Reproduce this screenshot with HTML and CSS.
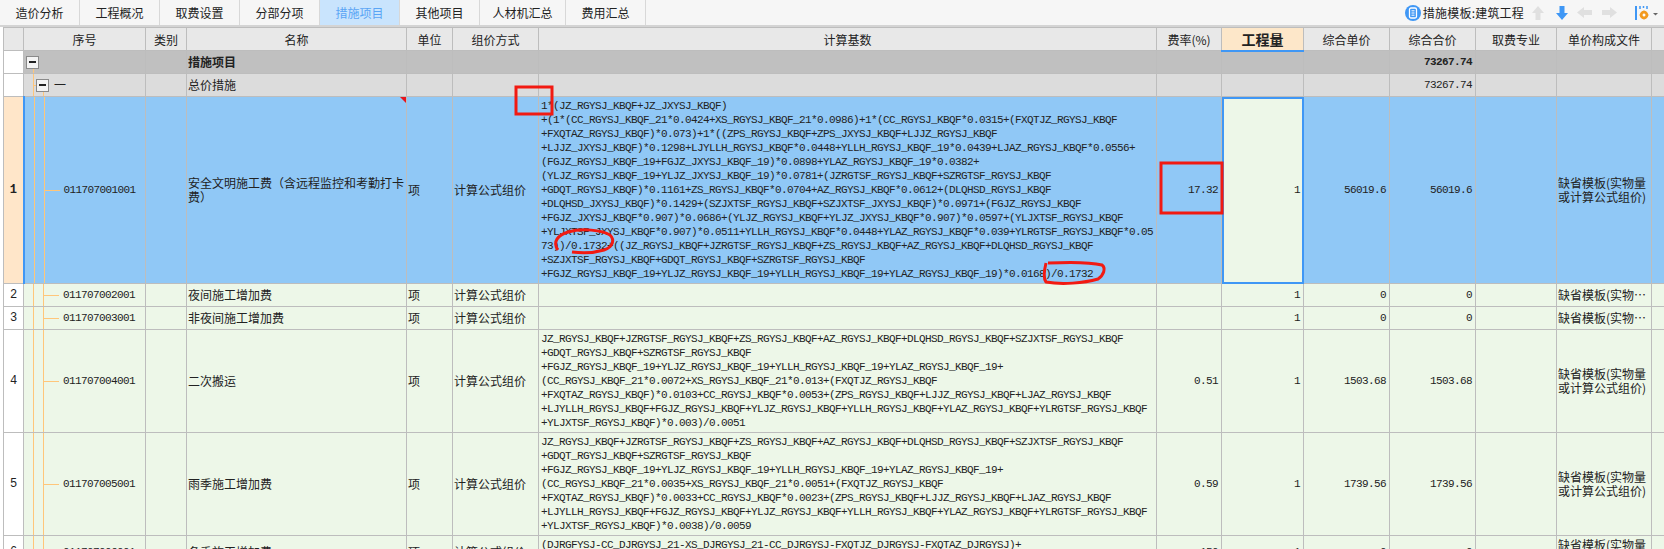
FILE: index.html
```html
<!DOCTYPE html>
<html lang="zh-CN">
<head>
  <meta charset="UTF-8" />
  <title>措施项目</title>
  <link rel="stylesheet" href="styles.css">
</head>
<body>
  <div class="topbar">
    <div class="tabs">
      <div class="tab">造价分析</div>
      <div class="tab">工程概况</div>
      <div class="tab">取费设置</div>
      <div class="tab">分部分项</div>
      <div class="tab active">措施项目</div>
      <div class="tab">其他项目</div>
      <div class="tab wide">人材机汇总</div>
      <div class="tab">费用汇总</div>
    </div>
    <div class="tools">
      <svg class="ico-doc" width="16" height="16" viewBox="0 0 16 16"><circle cx="8" cy="8" r="8" fill="#3f97f5"/><rect x="4.500" y="3" width="7" height="10" rx="1.500" fill="none" stroke="#fff" stroke-width="1.300"/><path d="M6.500 5.800h3M6.500 8h3M6.500 10.200h3" stroke="#fff"/></svg>
      <span class="tpl">措施模板:建筑工程</span>
      <svg class="ico up" width="12" height="14" viewBox="0 0 12 14"><path d="M6 0l6 7H8.500v7h-5V7H0z" fill="#e0e0e0"/></svg>
      <svg class="ico down" width="12" height="14" viewBox="0 0 12 14"><path d="M6 14L0 7h3.500V0h5v7H12z" fill="#3f97f5"/></svg>
      <svg class="ico left" width="15" height="11" viewBox="0 0 15 11"><path d="M0 5.500L7 0v3h8v5H7v3z" fill="#e0e0e0"/></svg>
      <svg class="ico right" width="15" height="11" viewBox="0 0 15 11"><path d="M15 5.500L8 0v3H0v5h8v3z" fill="#e0e0e0"/></svg>
      <svg class="ico gear" width="24" height="16" viewBox="0 0 24 16"><path d="M1 1v14" stroke="#3f97f5" stroke-width="2"/><path d="M5 1v3M8.500 1v2M12 1v3" stroke="#3f97f5" stroke-width="1.500"/><circle cx="9" cy="10" r="3" fill="none" stroke="#f39a1e" stroke-width="2.500"/><path d="M9 5.500v9M4.500 10h9M6 7l6 6M12 7l-6 6" stroke="#f39a1e"/><circle cx="9" cy="10" r="1.200" fill="#fff"/><path d="M18 8h5l-2.500 2.500z" fill="#666"/></svg>
    </div>
  </div>

  <table class="grid">
    <colgroup>
      <col class="c-head"><col class="c-seq"><col class="c-type"><col class="c-name"><col class="c-unit"><col class="c-way"><col class="c-base"><col class="c-rate"><col class="c-qty"><col class="c-price"><col class="c-total"><col class="c-spec"><col class="c-file"><col class="c-end">
    </colgroup>
    <thead>
      <tr>
        <th></th><th>序号</th><th>类别</th><th>名称</th><th>单位</th><th>组价方式</th><th>计算基数</th><th>费率(%)</th><th class="th-qty">工程量</th><th>综合单价</th><th>综合合价</th><th>取费专业</th><th>单价构成文件</th><th></th>
      </tr>
    </thead>
    <tbody>
      <tr class="group">
        <td class="rh"></td>
        <td class="tree t0"><span class="box"></span></td><td></td><td class="b">措施项目</td><td></td><td></td><td></td><td></td><td></td><td></td><td class="num b">73267.74</td><td></td><td></td><td></td>
      </tr>
      <tr class="sub">
        <td class="rh"></td>
        <td class="tree t1"><span class="box"></span><span class="dash">一</span></td><td></td><td>总价措施</td><td></td><td></td><td></td><td></td><td></td><td></td><td class="num">73267.74</td><td></td><td></td><td></td>
      </tr>
      <tr class="sel">
        <td class="rh cur">1</td>
        <td class="tree t2">011707001001</td><td></td><td class="name mark">安全文明施工费（含远程监控和考勤打卡费）</td><td>项</td><td>计算公式组价</td>
        <td class="formula">1*(JZ_RGYSJ_KBQF+JZ_JXYSJ_KBQF)<br>+(1*(CC_RGYSJ_KBQF_21*0.0424+XS_RGYSJ_KBQF_21*0.0986)+1*(CC_RGYSJ_KBQF*0.0315+(FXQTJZ_RGYSJ_KBQF<br>+FXQTAZ_RGYSJ_KBQF)*0.073)+1*((ZPS_RGYSJ_KBQF+ZPS_JXYSJ_KBQF+LJJZ_RGYSJ_KBQF<br>+LJJZ_JXYSJ_KBQF)*0.1298+LJYLLH_RGYSJ_KBQF*0.0448+YLLH_RGYSJ_KBQF_19*0.0439+LJAZ_RGYSJ_KBQF*0.0556+<br>(FGJZ_RGYSJ_KBQF_19+FGJZ_JXYSJ_KBQF_19)*0.0898+YLAZ_RGYSJ_KBQF_19*0.0382+<br>(YLJZ_RGYSJ_KBQF_19+YLJZ_JXYSJ_KBQF_19)*0.0781+(JZRGTSF_RGYSJ_KBQF+SZRGTSF_RGYSJ_KBQF<br>+GDQT_RGYSJ_KBQF)*0.1161+ZS_RGYSJ_KBQF*0.0704+AZ_RGYSJ_KBQF*0.0612+(DLQHSD_RGYSJ_KBQF<br>+DLQHSD_JXYSJ_KBQF)*0.1429+(SZJXTSF_RGYSJ_KBQF+SZJXTSF_JXYSJ_KBQF)*0.0971+(FGJZ_RGYSJ_KBQF<br>+FGJZ_JXYSJ_KBQF*0.907)*0.0686+(YLJZ_RGYSJ_KBQF+YLJZ_JXYSJ_KBQF*0.907)*0.0597+(YLJXTSF_RGYSJ_KBQF<br>+YLJXTSF_JXYSJ_KBQF*0.907)*0.0511+YLLH_RGYSJ_KBQF*0.0448+YLAZ_RGYSJ_KBQF*0.039+YLRGTSF_RGYSJ_KBQF*0.05<br>73))/0.1732+((JZ_RGYSJ_KBQF+JZRGTSF_RGYSJ_KBQF+ZS_RGYSJ_KBQF+AZ_RGYSJ_KBQF+DLQHSD_RGYSJ_KBQF<br>+SZJXTSF_RGYSJ_KBQF+GDQT_RGYSJ_KBQF+SZRGTSF_RGYSJ_KBQF<br>+FGJZ_RGYSJ_KBQF_19+YLJZ_RGYSJ_KBQF_19+YLLH_RGYSJ_KBQF_19+YLAZ_RGYSJ_KBQF_19)*0.0168)/0.1732</td>
        <td class="num">17.32</td><td class="num editing">1</td><td class="num">56019.6</td><td class="num">56019.6</td><td></td><td>缺省模板(实物量或计算公式组价)</td><td></td>
      </tr>
      <tr class="item">
        <td class="rh">2</td>
        <td class="tree t2">011707002001</td><td></td><td>夜间施工增加费</td><td>项</td><td>计算公式组价</td><td></td><td></td><td class="num">1</td><td class="num">0</td><td class="num">0</td><td></td><td class="cut">缺省模板(实物量或计算公式组价)</td><td></td>
      </tr>
      <tr class="item">
        <td class="rh">3</td>
        <td class="tree t2">011707003001</td><td></td><td>非夜间施工增加费</td><td>项</td><td>计算公式组价</td><td></td><td></td><td class="num">1</td><td class="num">0</td><td class="num">0</td><td></td><td class="cut">缺省模板(实物量或计算公式组价)</td><td></td>
      </tr>
      <tr class="item">
        <td class="rh">4</td>
        <td class="tree t2">011707004001</td><td></td><td>二次搬运</td><td>项</td><td>计算公式组价</td>
        <td class="formula">JZ_RGYSJ_KBQF+JZRGTSF_RGYSJ_KBQF+ZS_RGYSJ_KBQF+AZ_RGYSJ_KBQF+DLQHSD_RGYSJ_KBQF+SZJXTSF_RGYSJ_KBQF<br>+GDQT_RGYSJ_KBQF+SZRGTSF_RGYSJ_KBQF<br>+FGJZ_RGYSJ_KBQF_19+YLJZ_RGYSJ_KBQF_19+YLLH_RGYSJ_KBQF_19+YLAZ_RGYSJ_KBQF_19+<br>(CC_RGYSJ_KBQF_21*0.0072+XS_RGYSJ_KBQF_21*0.013+(FXQTJZ_RGYSJ_KBQF<br>+FXQTAZ_RGYSJ_KBQF)*0.0103+CC_RGYSJ_KBQF*0.0053+(ZPS_RGYSJ_KBQF+LJJZ_RGYSJ_KBQF+LJAZ_RGYSJ_KBQF<br>+LJYLLH_RGYSJ_KBQF+FGJZ_RGYSJ_KBQF+YLJZ_RGYSJ_KBQF+YLLH_RGYSJ_KBQF+YLAZ_RGYSJ_KBQF+YLRGTSF_RGYSJ_KBQF<br>+YLJXTSF_RGYSJ_KBQF)*0.003)/0.0051</td>
        <td class="num">0.51</td><td class="num">1</td><td class="num">1503.68</td><td class="num">1503.68</td><td></td><td>缺省模板(实物量或计算公式组价)</td><td></td>
      </tr>
      <tr class="item">
        <td class="rh">5</td>
        <td class="tree t2">011707005001</td><td></td><td>雨季施工增加费</td><td>项</td><td>计算公式组价</td>
        <td class="formula">JZ_RGYSJ_KBQF+JZRGTSF_RGYSJ_KBQF+ZS_RGYSJ_KBQF+AZ_RGYSJ_KBQF+DLQHSD_RGYSJ_KBQF+SZJXTSF_RGYSJ_KBQF<br>+GDQT_RGYSJ_KBQF+SZRGTSF_RGYSJ_KBQF<br>+FGJZ_RGYSJ_KBQF_19+YLJZ_RGYSJ_KBQF_19+YLLH_RGYSJ_KBQF_19+YLAZ_RGYSJ_KBQF_19+<br>(CC_RGYSJ_KBQF_21*0.0035+XS_RGYSJ_KBQF_21*0.0051+(FXQTJZ_RGYSJ_KBQF<br>+FXQTAZ_RGYSJ_KBQF)*0.0033+CC_RGYSJ_KBQF*0.0023+(ZPS_RGYSJ_KBQF+LJJZ_RGYSJ_KBQF+LJAZ_RGYSJ_KBQF<br>+LJYLLH_RGYSJ_KBQF+FGJZ_RGYSJ_KBQF+YLJZ_RGYSJ_KBQF+YLLH_RGYSJ_KBQF+YLAZ_RGYSJ_KBQF+YLRGTSF_RGYSJ_KBQF<br>+YLJXTSF_RGYSJ_KBQF)*0.0038)/0.0059</td>
        <td class="num">0.59</td><td class="num">1</td><td class="num">1739.56</td><td class="num">1739.56</td><td></td><td>缺省模板(实物量或计算公式组价)</td><td></td>
      </tr>
      <tr class="item">
        <td class="rh">6</td>
        <td class="tree t2">011707006001</td><td></td><td>冬季施工增加费</td><td>项</td><td>计算公式组价</td>
        <td class="formula">(DJRGFYSJ-CC_DJRGYSJ_21-XS_DJRGYSJ_21-CC_DJRGYSJ-FXQTJZ_DJRGYSJ-FXQTAZ_DJRGYSJ)+<br>DJJXFYSJ</td>
        <td class="num">150</td><td class="num">1</td><td class="num">0</td><td class="num">0</td><td></td><td>缺省模板(实物量或计算公式组价)</td><td></td>
      </tr>
    </tbody>
  </table>

  <!-- red marks someone drew on top of the screenshot -->
  <svg class="marks" width="1664" height="549" viewBox="0 0 1664 549">
    <rect x="516" y="87" width="36" height="27" fill="none" stroke="#f21a12" stroke-width="3"/>
    <rect x="1161" y="163" width="61" height="50" fill="none" stroke="#f21a12" stroke-width="3"/>
    <path d="M558 250c-6-8 0-15 10-18 14-4 34-2 42 3 5 5 3 12-6 15-10 3-24 3-32 2" fill="none" stroke="#f21a12" stroke-width="3"/>
    <path d="M1046 263c-2 8-3 15 0 19 16 3 38 1 52-3 6-4 8-11 4-14-12-3-32-3-54-2" fill="none" stroke="#f21a12" stroke-width="3"/>
  </svg>
</body>
</html>
```

FILE: styles.css
```css
* {
  margin: 0;
  padding: 0;
  box-sizing: border-box;
}

body {
  font-family: "Noto Sans CJK SC", sans-serif;
  font-size: 12px;
  color: #222;
  background: #fff;
  height: 549px;
  overflow: hidden;
  position: relative;
}

/* Top tabs + toolbar */
.topbar {
  display: flex;
  justify-content: space-between;
  height: 27px;
  background: #f6f6f6;
  border-bottom: 2px solid #d4d4d4;
}

.tabs {
  display: flex;
}

.tab {
  width: 80px;
  line-height: 25px;
  text-align: center;
  border-right: 1px solid #d8d8d8;
}

.tab.wide {
  width: 86px;
}

.tab.active {
  background: #c9e4fd;
  color: #5aa5f5;
}

.tools {
  display: flex;
  align-items: center;
  height: 25px;
  padding-right: 5px;
}

.tpl {
  margin: 0 8px 0 2px;
  letter-spacing: 0.2px;
}

.ico.up {
  margin-right: 12px;
}

.ico.down {
  margin-right: 9px;
}

.ico.left {
  margin-right: 10px;
}

.ico.right {
  margin-right: 18px;
}

/* Grid */
.grid {
  table-layout: fixed;
  border-collapse: collapse;
  width: 1661px;
  margin-left: 3px;
}

.c-head { width: 20px; }
.c-seq { width: 122px; }
.c-type { width: 41px; }
.c-name { width: 220px; }
.c-unit { width: 46px; }
.c-way { width: 86px; }
.c-base { width: 618px; }
.c-rate { width: 65px; }
.c-qty { width: 82px; }
.c-price { width: 86px; }
.c-total { width: 86px; }
.c-spec { width: 81px; }
.c-file { width: 95px; }
.c-end { width: 13px; }

th, td {
  border: 1px solid #bdbdbd;
  font-weight: normal;
  overflow: hidden;
}

th {
  height: 23px;
  background: #e8e8e8;
  text-align: center;
}

th.th-qty {
  background: #fde7c9;
  font-size: 14px;
  font-weight: bold;
  border-bottom: 2px solid #3f97f5;
}

td {
  height: 23px;
  padding: 0 1px;
  vertical-align: middle;
  line-height: 14px;
}

.group td { background-color: #c0c0c0; }
.sub td { background-color: #dcdcdc; }
.sel td { background-color: #90c8f6; }
.item td { background-color: #edf7e8; }

.group .rh, .sub .rh, .item .rh {
  background-color: #fff;
}

.rh {
  text-align: center;
  font-family: "Liberation Mono", monospace;
  font-size: 12px;
}

.sel .cur {
  background-color: #ffe6c9;
  font-weight: bold;
  border-right: 2px solid #3f97f5;
}

td.b {
  font-weight: bold;
}

td.name {
  padding-right: 0;
}

td.num {
  font-family: "Liberation Mono", monospace;
  font-size: 11px;
  letter-spacing: -0.6px;
  text-align: right;
  padding-right: 3px;
}

td.formula {
  font-family: "Liberation Mono", monospace;
  font-size: 11px;
  letter-spacing: -0.6px;
  padding: 2px;
  white-space: nowrap;
}

.sel .editing {
  background-color: #edf7e8;
  outline: 2px solid #3f97f5;
  outline-offset: -2px;
}

.cut {
  white-space: nowrap;
  text-overflow: ellipsis;
}

/* Tree column: the orange guide lines are painted as cell backgrounds */
.tree {
  font-family: "Liberation Mono", monospace;
  font-size: 11px;
  letter-spacing: -0.6px;
  background-repeat: no-repeat;
}

td.t2 {
  padding-left: 39px;
  background-image:
    linear-gradient(#ffc67a, #ffc67a),
    linear-gradient(#ffc67a, #ffc67a),
    linear-gradient(#ffc67a, #ffc67a);
  background-size: 1px 100%, 1px 100%, 16px 1px;
  background-position: 9px 0, 19px 0, 19px 50%;
}

td.t0 {
  padding-left: 2px;
  background-image: linear-gradient(#ffc67a, #ffc67a);
  background-size: 1px 6px;
  background-position: 9px 100%;
}

td.t1 {
  padding-left: 12px;
  background-image:
    linear-gradient(#ffc67a, #ffc67a),
    linear-gradient(#ffc67a, #ffc67a),
    linear-gradient(#ffc67a, #ffc67a);
  background-size: 1px 100%, 1px 6px, 4px 1px;
  background-position: 9px 0, 19px 100%, 9px 50%;
}

.box {
  display: inline-block;
  position: relative;
  width: 13px;
  height: 13px;
  vertical-align: middle;
  background: #f4f4f4;
  border: 1px solid #8a8a8a;
}

.box::after {
  content: '';
  position: absolute;
  left: 2px;
  right: 2px;
  top: 4px;
  height: 2px;
  background: #222;
}

.dash {
  font-family: "Noto Sans CJK SC", sans-serif;
  font-size: 12px;
  letter-spacing: 0;
  margin-left: 5px;
  vertical-align: middle;
}

/* little red flag in the corner of a cell */
.mark {
  position: relative;
}

.mark::after {
  content: '';
  position: absolute;
  top: 0;
  right: 0;
  border-top: 6px solid #e8141c;
  border-left: 6px solid transparent;
}

.marks {
  position: absolute;
  left: 0;
  top: 0;
  pointer-events: none;
}
```
